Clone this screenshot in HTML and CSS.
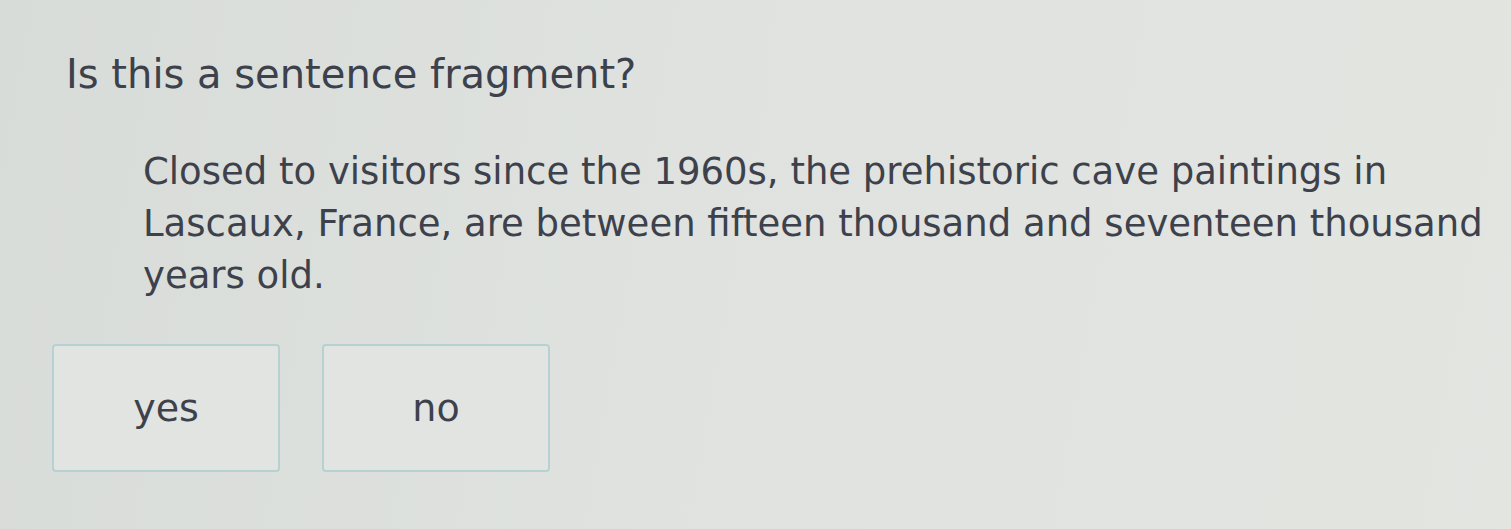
FILE: index.html
```html
<!DOCTYPE html>
<html lang="en">
<head>
    <meta charset="UTF-8">
    <meta name="viewport" content="width=device-width, initial-scale=1.0">
    <title>Sentence fragment</title>
    <link rel="stylesheet" href="styles.css">
</head>
<body>
    <div class="question">
        <h1 class="prompt">Is this a sentence fragment?</h1>

        <!-- the passage to judge -->
        <p class="passage">Closed to visitors since the 1960s, the prehistoric cave paintings in Lascaux, France, are between fifteen thousand and seventeen thousand years old.</p>

        <!-- answer choices -->
        <div class="choices">
            <button class="choice" type="button">yes</button>
            <button class="choice" type="button">no</button>
        </div>
    </div>
</body>
</html>
```

FILE: styles.css
```css
body {
    margin: 0;
    height: 529px;
    overflow: hidden;
    font-family: "DejaVu Sans", Verdana, sans-serif;
    color: #3d414b;
    background: linear-gradient(100deg, #d8dcd9 0%, #dfe2df 45%, #e3e5e1 100%);
}

.question {
    padding: 46px 0 0 0;
}

.prompt {
    margin: 0 0 0 66px;
    font-size: 40px;
    font-weight: normal;
    line-height: 56px;
}

/* passage is indented under the prompt */
.passage {
    margin: 44px 0 0 143px;
    width: 1355px;
    font-size: 37px;
    line-height: 52px;
}

.choices {
    display: flex;
    gap: 42px;
    margin: 42px 0 0 52px;
}

.choice {
    width: 228px;
    height: 128px;
    border: 2px solid #b6d1d1;
    border-radius: 4px;
    background-color: #e1e4e1;
    color: #3d414b;
    font-family: "DejaVu Sans", Verdana, sans-serif;
    font-size: 38px;
    padding: 0;
    cursor: pointer;
}
```
